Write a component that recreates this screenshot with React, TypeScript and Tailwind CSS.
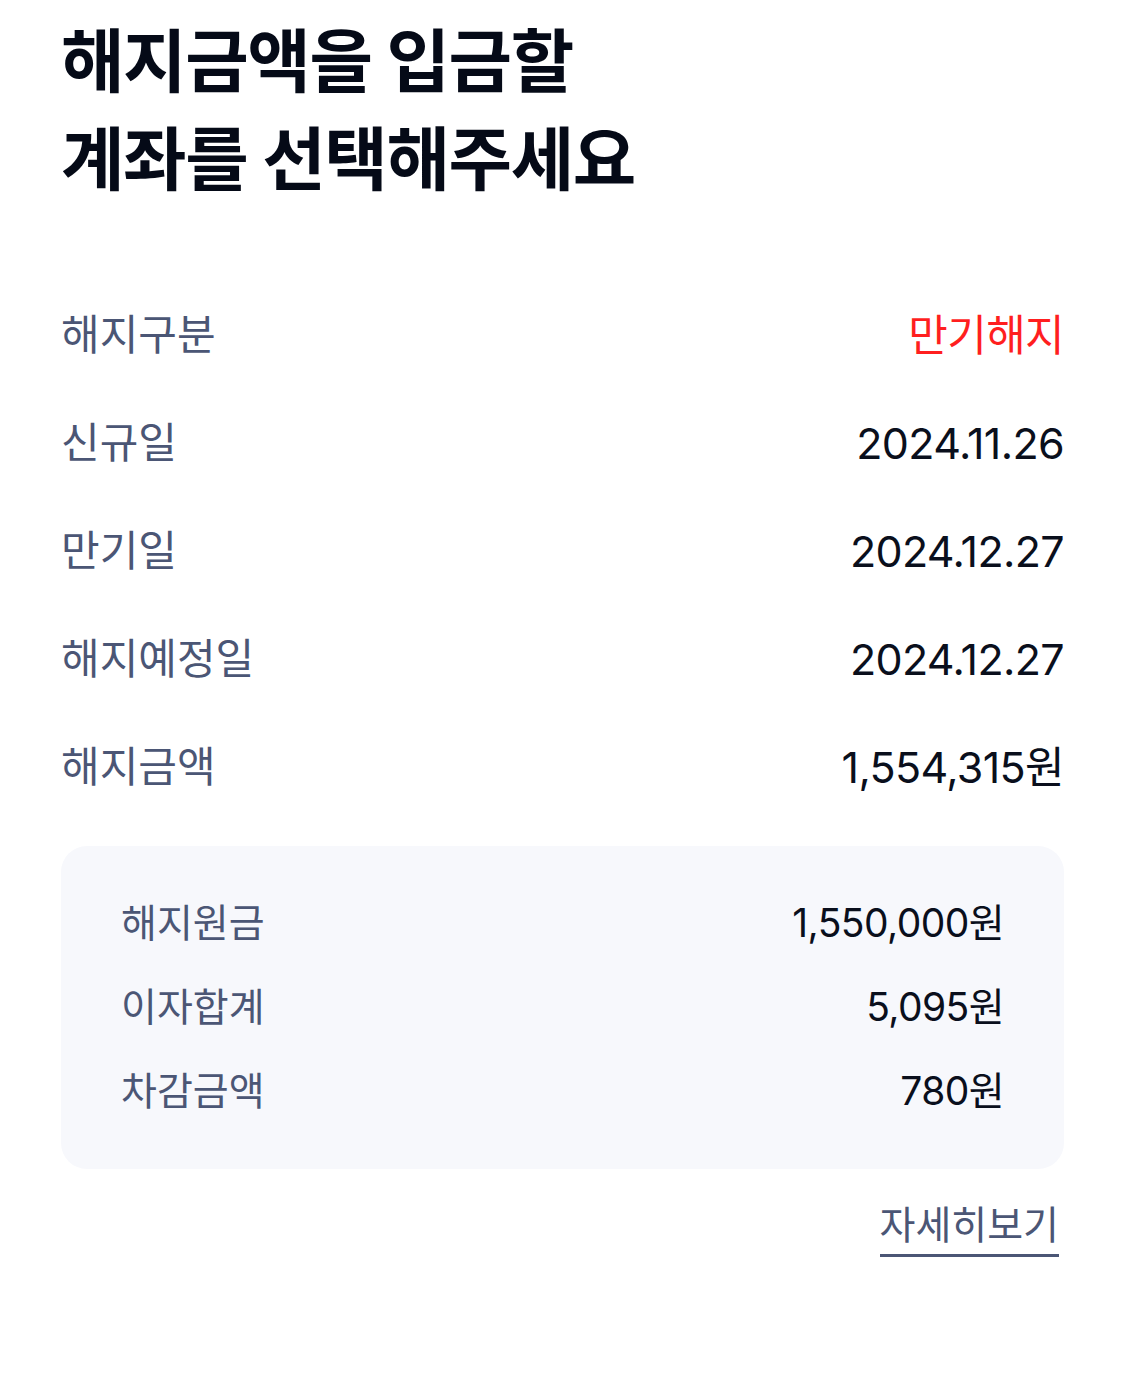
import React from "react";

interface Row {
  label: string;
  value: string;
  red?: boolean;
}

const rows: Row[] = [
  {label: "해지구분", value: "만기해지", red: true},
  {label: "신규일", value: "2024.11.26"},
  {label: "만기일", value: "2024.12.27"},
  {label: "해지예정일", value: "2024.12.27"},
  {label: "해지금액", value: "1,554,315원"},
];

const detail: Row[] = [
  {label: "해지원금", value: "1,550,000원"},
  {label: "이자합계", value: "5,095원"},
  {label: "차감금액", value: "780원"},
];

const font = "font-['Inter','Noto_Sans_CJK_KR',sans-serif]";

export default function App() {
  return (
    <div className={`min-h-screen w-full bg-white px-[61px] pt-[13px] ${font}`}>
      <h1 className="text-[69px] font-bold leading-[98px] tracking-[-0.02em] text-[#050a17]">
        해지금액을 입금할
        <br />
        계좌를 선택해주세요
      </h1>

      <div className="mt-[72px] flex flex-col">
        {rows.map((row) => (
          <div key={row.label} className="flex h-[108px] items-center justify-between">
            <span className="text-[42px] leading-[56px] text-[#4b5675]">{row.label}</span>
            <span
              className={`text-[43px] leading-[56px] tracking-[-0.015em] ${row.red ? "text-[#ff1f1f]" : "text-[#0a0f1c]"}`}
            >
              {row.value}
            </span>
          </div>
        ))}
      </div>

      <div className="mt-[25px] flex flex-col rounded-[26px] bg-[#f7f8fc] px-[60px] pb-[36px] pt-[35px]">
        {detail.map((row) => (
          <div key={row.label} className="flex h-[84px] items-center justify-between">
            <span className="text-[39px] leading-[52px] text-[#4b5675]">{row.label}</span>
            <span className="text-[39px] leading-[52px] tracking-[-0.015em] text-[#0a0f1c]">{row.value}</span>
          </div>
        ))}
      </div>

      <div className="mt-[31px] flex justify-end pr-[5px]">
        <button className="border-b-[3px] border-[#4b5675] pb-[4px] text-[39px] leading-[50px] text-[#4b5675]">
          자세히보기
        </button>
      </div>
    </div>
  );
}
